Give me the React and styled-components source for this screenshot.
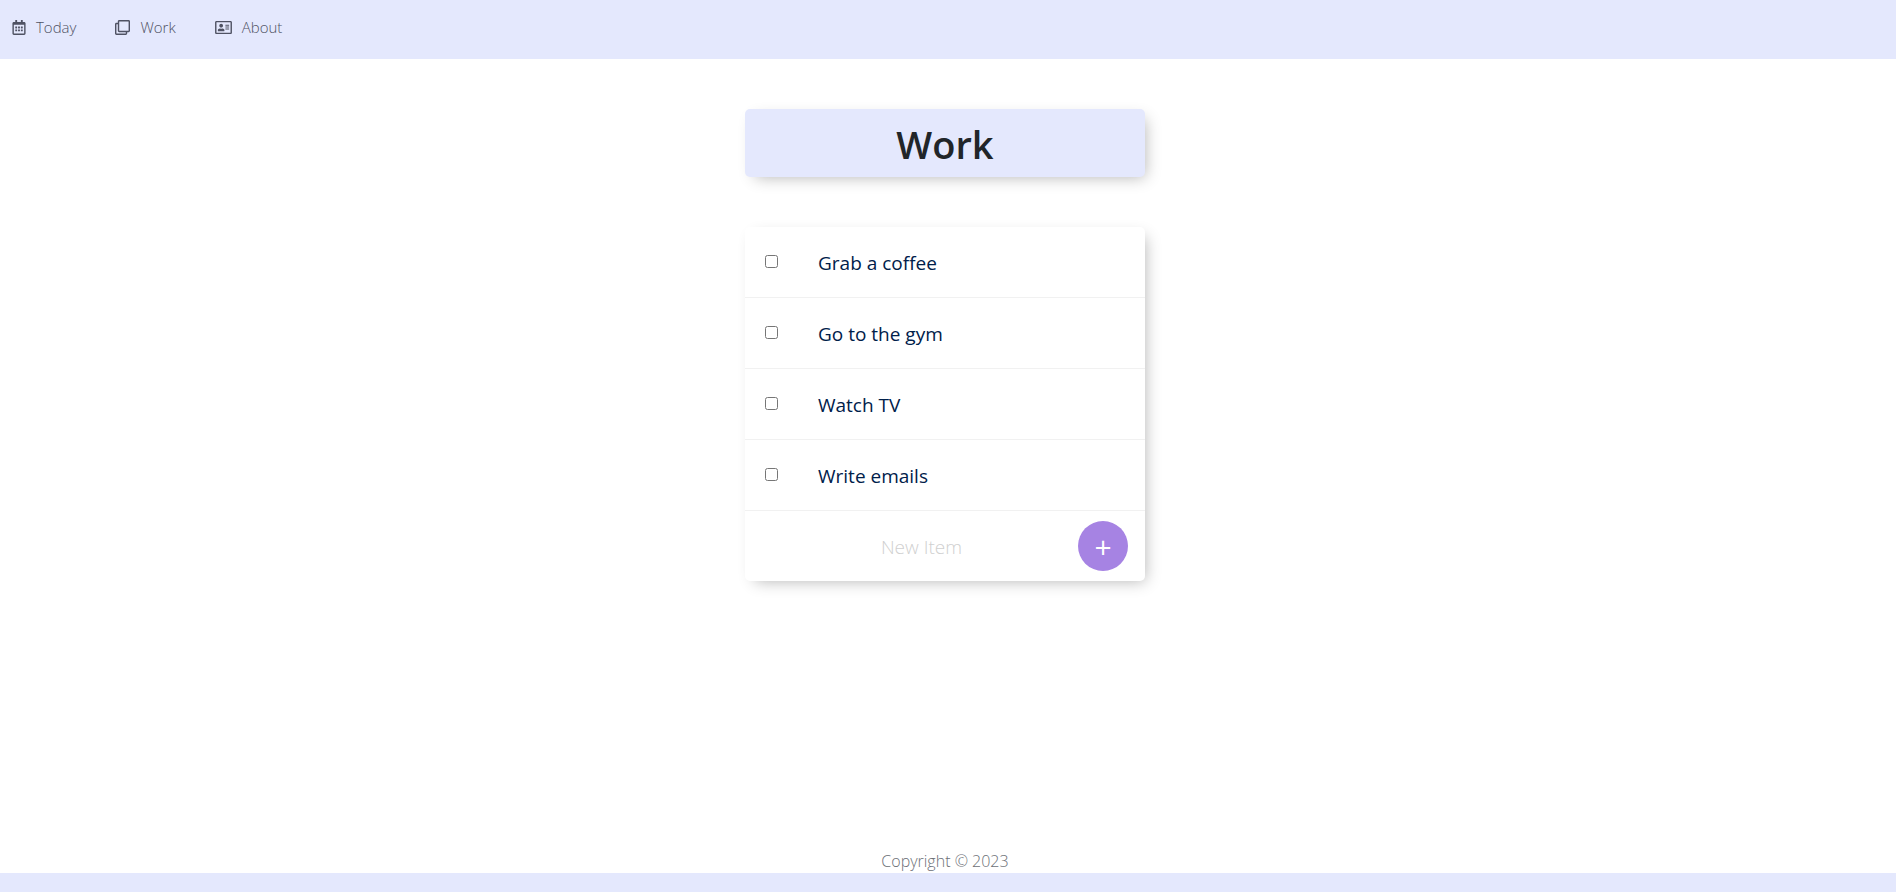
import React from "react";
import styled, { createGlobalStyle } from "styled-components";
import { FaRegCalendarAlt, FaRegClone, FaRegAddressCard } from "react-icons/fa";

const GlobalStyle = createGlobalStyle`
  *, *::before, *::after { box-sizing: border-box; }
  body {
    margin: 0;
    background: #fff;
    color: #212529;
    font: 400 16px/24px "Segoe UI", "Open Sans", "Noto Sans", sans-serif;
  }
`;

const Page = styled.div`
  display: flex;
  flex-direction: column;
  min-height: 100vh;
`;

const NavBar = styled.nav`
  background: #e4e8fd;
  padding: 7px 12px 12px;
`;

const NavList = styled.ul`
  display: flex;
  gap: 39px;
  margin: 0;
  padding: 0;
  list-style: none;
`;

const NavLink = styled.a`
  display: flex;
  align-items: center;
  gap: 10px;
  height: 40px;
  color: #4f5263;
  font-size: 15px;
  font-weight: 300;
  text-decoration: none;

  svg { width: ${(p) => p.$iconWidth}px; height: 15px; }
`;

const Main = styled.main`
  flex: 1;
  display: flex;
  flex-direction: column;
  align-items: center;
  gap: 50px;
  padding: 50px 6px 50px 0;
`;

const Card = styled.div`
  width: 400px;
  max-width: 100%;
  border-radius: 5px;
  background: ${(p) => (p.$tinted ? "#e4e8fd" : "#fff")};
  box-shadow: 5px 5px 15px -5px rgba(0, 0, 0, 0.3);
`;

const Title = styled.h1`
  margin: 0;
  padding: 11px 10px 9px;
  font-size: 38px;
  font-weight: 600;
  line-height: 48px;
  text-align: center;
`;

const Item = styled.label`
  display: flex;
  align-items: center;
  gap: 40px;
  height: 71px;
  padding: 2px 20px 0;
  border-bottom: 1px solid #f1f1f1;
  color: #00204a;
  font-size: 19px;
`;

const Checkbox = styled.input`
  width: 13px;
  height: 13px;
  margin: 0 0 4px;
`;

const NewItem = styled.form`
  display: flex;
  align-items: center;
  height: 70px;
  padding-right: 17px;
`;

const NewItemInput = styled.input`
  flex: 1;
  min-width: 0;
  height: 60px;
  padding: 2px 0 0 20px;
  border: 0;
  outline: 0;
  background: transparent;
  color: #00204a;
  font: 300 19px/30px "Segoe UI", "Open Sans", "Noto Sans", sans-serif;
  text-align: center;

  &::placeholder { color: #d0d0d0; opacity: 1; }
`;

const AddButton = styled.button`
  width: 50px;
  height: 50px;
  padding: 2px 0 0;
  border: 0;
  border-radius: 50%;
  background: #a683e3;
  color: #fff;
  font: 400 30px/48px "Segoe UI", "Open Sans", "Noto Sans", sans-serif;
`;

const Footer = styled.footer`
  padding-right: 6px;
  border-bottom: 19px solid #e4e8fd;
  color: #6c6f76;
  font-weight: 300;
  text-align: center;
`;

const links = [
  { label: "Today", Icon: FaRegCalendarAlt, width: 14 },
  { label: "Work", Icon: FaRegClone, width: 15 },
  { label: "About", Icon: FaRegAddressCard, width: 17 },
];

const items = ["Grab a coffee", "Go to the gym", "Watch TV", "Write emails"];

export default function App() {
  return (
    <Page>
      <GlobalStyle />
      <NavBar>
        <NavList>
          {links.map(({ label, Icon, width }) => (
            <li key={label}>
              <NavLink href={`#${label.toLowerCase()}`} $iconWidth={width}>
                <Icon aria-hidden="true" />
                {label}
              </NavLink>
            </li>
          ))}
        </NavList>
      </NavBar>
      <Main>
        <Card $tinted>
          <Title>Work</Title>
        </Card>
        <Card>
          {items.map((item) => (
            <Item key={item}>
              <Checkbox type="checkbox" />
              {item}
            </Item>
          ))}
          <NewItem onSubmit={(event) => event.preventDefault()}>
            <NewItemInput type="text" placeholder="New Item" aria-label="New Item" autoComplete="off" />
            <AddButton type="submit">+</AddButton>
          </NewItem>
        </Card>
      </Main>
      <Footer>Copyright © 2023</Footer>
    </Page>
  );
}
